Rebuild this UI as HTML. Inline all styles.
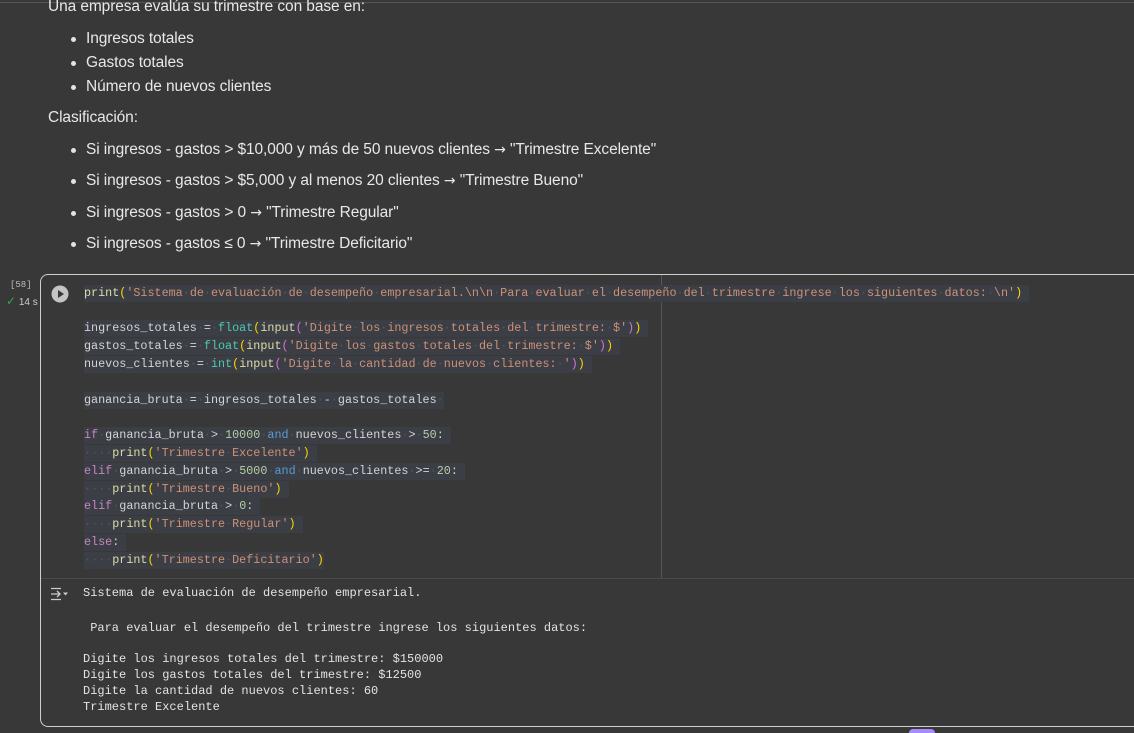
<!DOCTYPE html>
<html style="overflow:hidden;height:733px"><head><meta charset="utf-8"><style>
body{margin:0;width:1134px;height:733px;background:#383838;overflow:hidden;position:relative;font-family:"Liberation Sans",sans-serif;color:#e8e8e8}
.t{position:absolute;font-size:15.5px;white-space:nowrap;letter-spacing:-0.1px}
.a{font-family:"DejaVu Sans",sans-serif;font-size:14px}
.b{position:absolute;width:5px;height:5px;border-radius:50%;background:#e3e3e3}
.c{position:absolute;left:84px;font-family:"Liberation Mono",monospace;font-size:11.75px;line-height:17px;white-space:pre;color:#d4d4d4;background:#3b3e44;height:17px}
.d{color:#55575b}
.s{color:#ce9178}.f{color:#dcdcaa}.y{color:#ffd700}.p{color:#da70d6}.g{color:#4ec9b0}.n{color:#b5cea8}.k{color:#569cd6}.q{color:#c586c0}
.o{position:absolute;left:83px;font-family:"Liberation Mono",monospace;font-size:12px;white-space:pre;color:#e3e3e3;line-height:16px}
</style></head><body>
<div style="position:absolute;left:0;top:2px;width:1134px;height:1px;background:#555"></div>
<div class="t" style="left:48px;top:-2px">Una empresa evalúa su trimestre con base en:</div>
<div class="b" style="left:71px;top:37px"></div><div class="t" style="left:86px;top:30px">Ingresos totales</div>
<div class="b" style="left:71px;top:61px"></div><div class="t" style="left:86px;top:54px">Gastos totales</div>
<div class="b" style="left:71px;top:85px"></div><div class="t" style="left:86px;top:78px">Número de nuevos clientes</div>
<div class="t" style="left:48px;top:109px">Clasificación:</div>
<div class="b" style="left:71px;top:148px"></div><div class="t" style="left:86px;top:141px">Si ingresos - gastos &gt; $10,000 y más de 50 nuevos clientes <span class="a">→</span> "Trimestre Excelente"</div>
<div class="b" style="left:71px;top:179px"></div><div class="t" style="left:86px;top:172px">Si ingresos - gastos &gt; $5,000 y al menos 20 clientes <span class="a">→</span> "Trimestre Bueno"</div>
<div class="b" style="left:71px;top:211px"></div><div class="t" style="left:86px;top:204px">Si ingresos - gastos &gt; 0 <span class="a">→</span> "Trimestre Regular"</div>
<div class="b" style="left:71px;top:242px"></div><div class="t" style="left:86px;top:235px">Si ingresos - gastos ≤ 0 <span class="a">→</span> "Trimestre Deficitario"</div>

<div style="position:absolute;left:10px;top:280px;font-family:'Liberation Mono',monospace;font-size:9px;color:#bbb">[58]</div>
<div style="position:absolute;left:6px;top:294px;font-size:10px;color:#ccc"><span style="color:#34a853;font-size:12px">✓</span> 14 s</div>

<div style="position:absolute;left:40px;top:274px;width:1110px;height:451px;border:1px solid #cfcfcf;border-right:none;border-radius:8px 0 0 8px"></div>
<div style="position:absolute;left:41px;top:578px;width:1100px;height:1px;background:#4a4a4a"></div>
<div style="position:absolute;left:661px;top:275px;width:1px;height:303px;background:#555"></div>

<svg style="position:absolute;left:51px;top:285px" width="18" height="18" viewBox="0 0 18 18"><circle cx="9" cy="9" r="8.5" fill="#c4c4c4"/><path d="M7 5 L13 9 L7 13Z" fill="#383838"/></svg>

<div class="c" style="top:285px"><span class="f">print</span><span class="y">(</span><span class="s">'Sistema<span class="d">·</span>de<span class="d">·</span>evaluación<span class="d">·</span>de<span class="d">·</span>desempeño<span class="d">·</span>empresarial.\n\n<span class="d">·</span>Para<span class="d">·</span>evaluar<span class="d">·</span>el<span class="d">·</span>desempeño<span class="d">·</span>del<span class="d">·</span>trimestre<span class="d">·</span>ingrese<span class="d">·</span>los<span class="d">·</span>siguientes<span class="d">·</span>datos:<span class="d">·</span>\n'</span><span class="y">)</span> </div>
<div class="c" style="top:320px">ingresos_totales<span class="d">·</span>=<span class="d">·</span><span class="g">float</span><span class="y">(</span><span class="f">input</span><span class="p">(</span><span class="s">'Digite<span class="d">·</span>los<span class="d">·</span>ingresos<span class="d">·</span>totales<span class="d">·</span>del<span class="d">·</span>trimestre:<span class="d">·</span>$'</span><span class="p">)</span><span class="y">)</span> </div>
<div class="c" style="top:338px">gastos_totales<span class="d">·</span>=<span class="d">·</span><span class="g">float</span><span class="y">(</span><span class="f">input</span><span class="p">(</span><span class="s">'Digite<span class="d">·</span>los<span class="d">·</span>gastos<span class="d">·</span>totales<span class="d">·</span>del<span class="d">·</span>trimestre:<span class="d">·</span>$'</span><span class="p">)</span><span class="y">)</span> </div>
<div class="c" style="top:356px">nuevos_clientes<span class="d">·</span>=<span class="d">·</span><span class="g">int</span><span class="y">(</span><span class="f">input</span><span class="p">(</span><span class="s">'Digite<span class="d">·</span>la<span class="d">·</span>cantidad<span class="d">·</span>de<span class="d">·</span>nuevos<span class="d">·</span>clientes:<span class="d">·</span>'</span><span class="p">)</span><span class="y">)</span> </div>
<div class="c" style="top:392px">ganancia_bruta<span class="d">·</span>=<span class="d">·</span>ingresos_totales<span class="d">·</span>-<span class="d">·</span>gastos_totales<span class="d">·</span></div>
<div class="c" style="top:427px"><span class="q">if</span><span class="d">·</span>ganancia_bruta<span class="d">·</span>&gt;<span class="d">·</span><span class="n">10000</span><span class="d">·</span><span class="k">and</span><span class="d">·</span>nuevos_clientes<span class="d">·</span>&gt;<span class="d">·</span><span class="n">50</span>: </div>
<div class="c" style="top:445px"><span class="d">····</span><span class="f">print</span><span class="y">(</span><span class="s">'Trimestre<span class="d">·</span>Excelente'</span><span class="y">)</span> </div>
<div class="c" style="top:463px"><span class="q">elif</span><span class="d">·</span>ganancia_bruta<span class="d">·</span>&gt;<span class="d">·</span><span class="n">5000</span><span class="d">·</span><span class="k">and</span><span class="d">·</span>nuevos_clientes<span class="d">·</span>&gt;=<span class="d">·</span><span class="n">20</span>: </div>
<div class="c" style="top:481px"><span class="d">····</span><span class="f">print</span><span class="y">(</span><span class="s">'Trimestre<span class="d">·</span>Bueno'</span><span class="y">)</span> </div>
<div class="c" style="top:498px"><span class="q">elif</span><span class="d">·</span>ganancia_bruta<span class="d">·</span>&gt;<span class="d">·</span><span class="n">0</span>: </div>
<div class="c" style="top:516px"><span class="d">····</span><span class="f">print</span><span class="y">(</span><span class="s">'Trimestre<span class="d">·</span>Regular'</span><span class="y">)</span> </div>
<div class="c" style="top:534px"><span class="q">else</span>: </div>
<div class="c" style="top:552px"><span class="d">····</span><span class="f">print</span><span class="y">(</span><span class="s">'Trimestre<span class="d">·</span>Deficitario'</span><span class="y">)</span></div>

<svg style="position:absolute;left:50px;top:587px" width="20" height="14" viewBox="0 0 20 14" fill="none" stroke="#ccc" stroke-width="1.3"><path d="M1 1.5H11M1 12.5H11M1 7H10M7 4L10 7L7 10"/><path d="M13 5.5H18L15.5 8.5Z" fill="#ccc" stroke="none"/></svg>
<div class="o" style="top:585px">Sistema de evaluación de desempeño empresarial.</div>
<div class="o" style="top:620px"> Para evaluar el desempeño del trimestre ingrese los siguientes datos:</div>
<div class="o" style="top:651px">Digite los ingresos totales del trimestre: $150000
Digite los gastos totales del trimestre: $12500
Digite la cantidad de nuevos clientes: 60
Trimestre Excelente</div>
<div style="position:absolute;left:909px;top:729px;width:26px;height:4px;border-radius:13px 13px 0 0;background:#a78bfa"></div>
</body></html>
